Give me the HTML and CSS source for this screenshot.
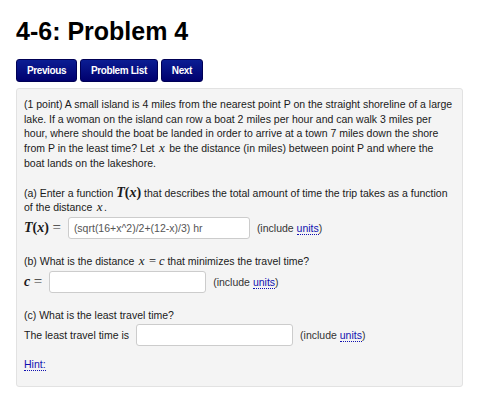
FILE: index.html
```html
<!DOCTYPE html>
<html>
<head>
<meta charset="utf-8">
<link rel="stylesheet" href="styles.css">
</head>
<body>
<h1 class="title">4-6: Problem 4</h1>
<div class="nav">
  <span class="btn">Previous</span>
  <span class="btn">Problem List</span>
  <span class="btn">Next</span>
</div>
<div class="panel">
  <p class="intro">(1 point) A small island is 4 miles from the nearest point P on the straight shoreline of a large lake. If a woman on the island can row a boat 2 miles per hour and can walk 3 miles per hour, where should the boat be landed in order to arrive at a town 7 miles down the shore from P in the least time? Let <span class="mi tx">x</span> be the distance (in miles) between point P and where the boat lands on the lakeshore.</p>

  <p class="q">(a) Enter a function <span class="mbig"><span class="mi">T</span>(<span class="mi">x</span>)</span> that describes the total amount of time the trip takes as a function of the distance <span class="mi tx">x</span>.</p>
  <div class="row">
    <span class="mbig"><span class="mi">T</span>(<span class="mi">x</span>) <span class="eq">=</span></span>
    <span class="field wa">(sqrt(16+x^2)/2+(12-x)/3) hr</span>
    <span class="unit">(include <span class="link">units</span>)</span>
  </div>

  <p class="q">(b) What is the distance <span class="mi tx">x</span> <span class="mo">=</span> <span class="mi">c</span> that minimizes the travel time?</p>
  <div class="row">
    <span class="mbig"><span class="mi">c</span> <span class="eq">=</span></span>
    <span class="field wb"></span>
    <span class="unit">(include <span class="link">units</span>)</span>
  </div>

  <p class="q">(c) What is the least travel time?</p>
  <div class="row">
    <span>The least travel time is</span>
    <span class="field wb"></span>
    <span class="unit">(include <span class="link">units</span>)</span>
  </div>

  <p class="hint"><span class="link">Hint:</span></p>
</div>
</body>
</html>
```

FILE: styles.css
```css
body {
  margin: 0;
  font-family: "Liberation Sans", Arial, sans-serif;
  color: #1a1a1a;
  background: #ffffff;
}
.title {
  margin: 16px 0 0 16px;
  font-size: 25px;
  line-height: 30px;
  font-weight: bold;
  color: #000;
}
.nav {
  display: flex;
  gap: 3px;
  margin: 13px 0 0 16px;
}
.btn {
  display: flex;
  align-items: center;
  height: 23px;
  padding: 0 10px;
  box-sizing: border-box;
  font-size: 10px;
  font-weight: bold;
  letter-spacing: -0.4px;
  color: #fff;
  background: linear-gradient(#0b1d93, #00006e);
  border: 1px solid #000055;
  border-radius: 3px;
}
.panel {
  margin: 6px 0 0 16px;
  width: 447px;
  box-sizing: border-box;
  height: 299px;
  padding: 8px 8px 0 7px;
  background: #f4f4f4;
  border: 1px solid #e2e2e2;
  border-radius: 3px;
  font-size: 10.5px;
  line-height: 14.7px;
}
p { margin: 0; }
.intro { margin-bottom: 15px; }
.row {
  display: flex;
  align-items: center;
  gap: 7px;
  margin: 2px 0 15px 0;
  line-height: 16px;
}
.mi {
  font-family: "Liberation Serif", "Times New Roman", serif;
  font-style: italic;
  font-size: 12.5px;
  line-height: 1;
}
.tx {
  font-size: 13px;
  margin: 0 1.5px;
}
.mo {
  font-family: "Liberation Serif", serif;
  font-size: 12.5px;
  line-height: 1;
}
.mbig {
  font-family: "Liberation Serif", serif;
  font-size: 14px;
  font-weight: bold;
  line-height: 1;
}
.mbig .mi { font-size: 14px; }
.eq {
  font-weight: normal;
  font-size: 15px;
  color: #333;
}
.field {
  display: flex;
  align-items: center;
  height: 22px;
  box-sizing: border-box;
  padding: 0 5px;
  background: #fff;
  border: 1px solid #cccccc;
  border-radius: 3px;
  color: #555;
  font-size: 10.5px;
}
.wa { width: 182px; }
.wb { width: 157px; }
.unit { color: #333; }
.link {
  color: #1010b0;
  border-bottom: 1px dotted #1010b0;
}
.hint { margin-top: -4px; }
```
